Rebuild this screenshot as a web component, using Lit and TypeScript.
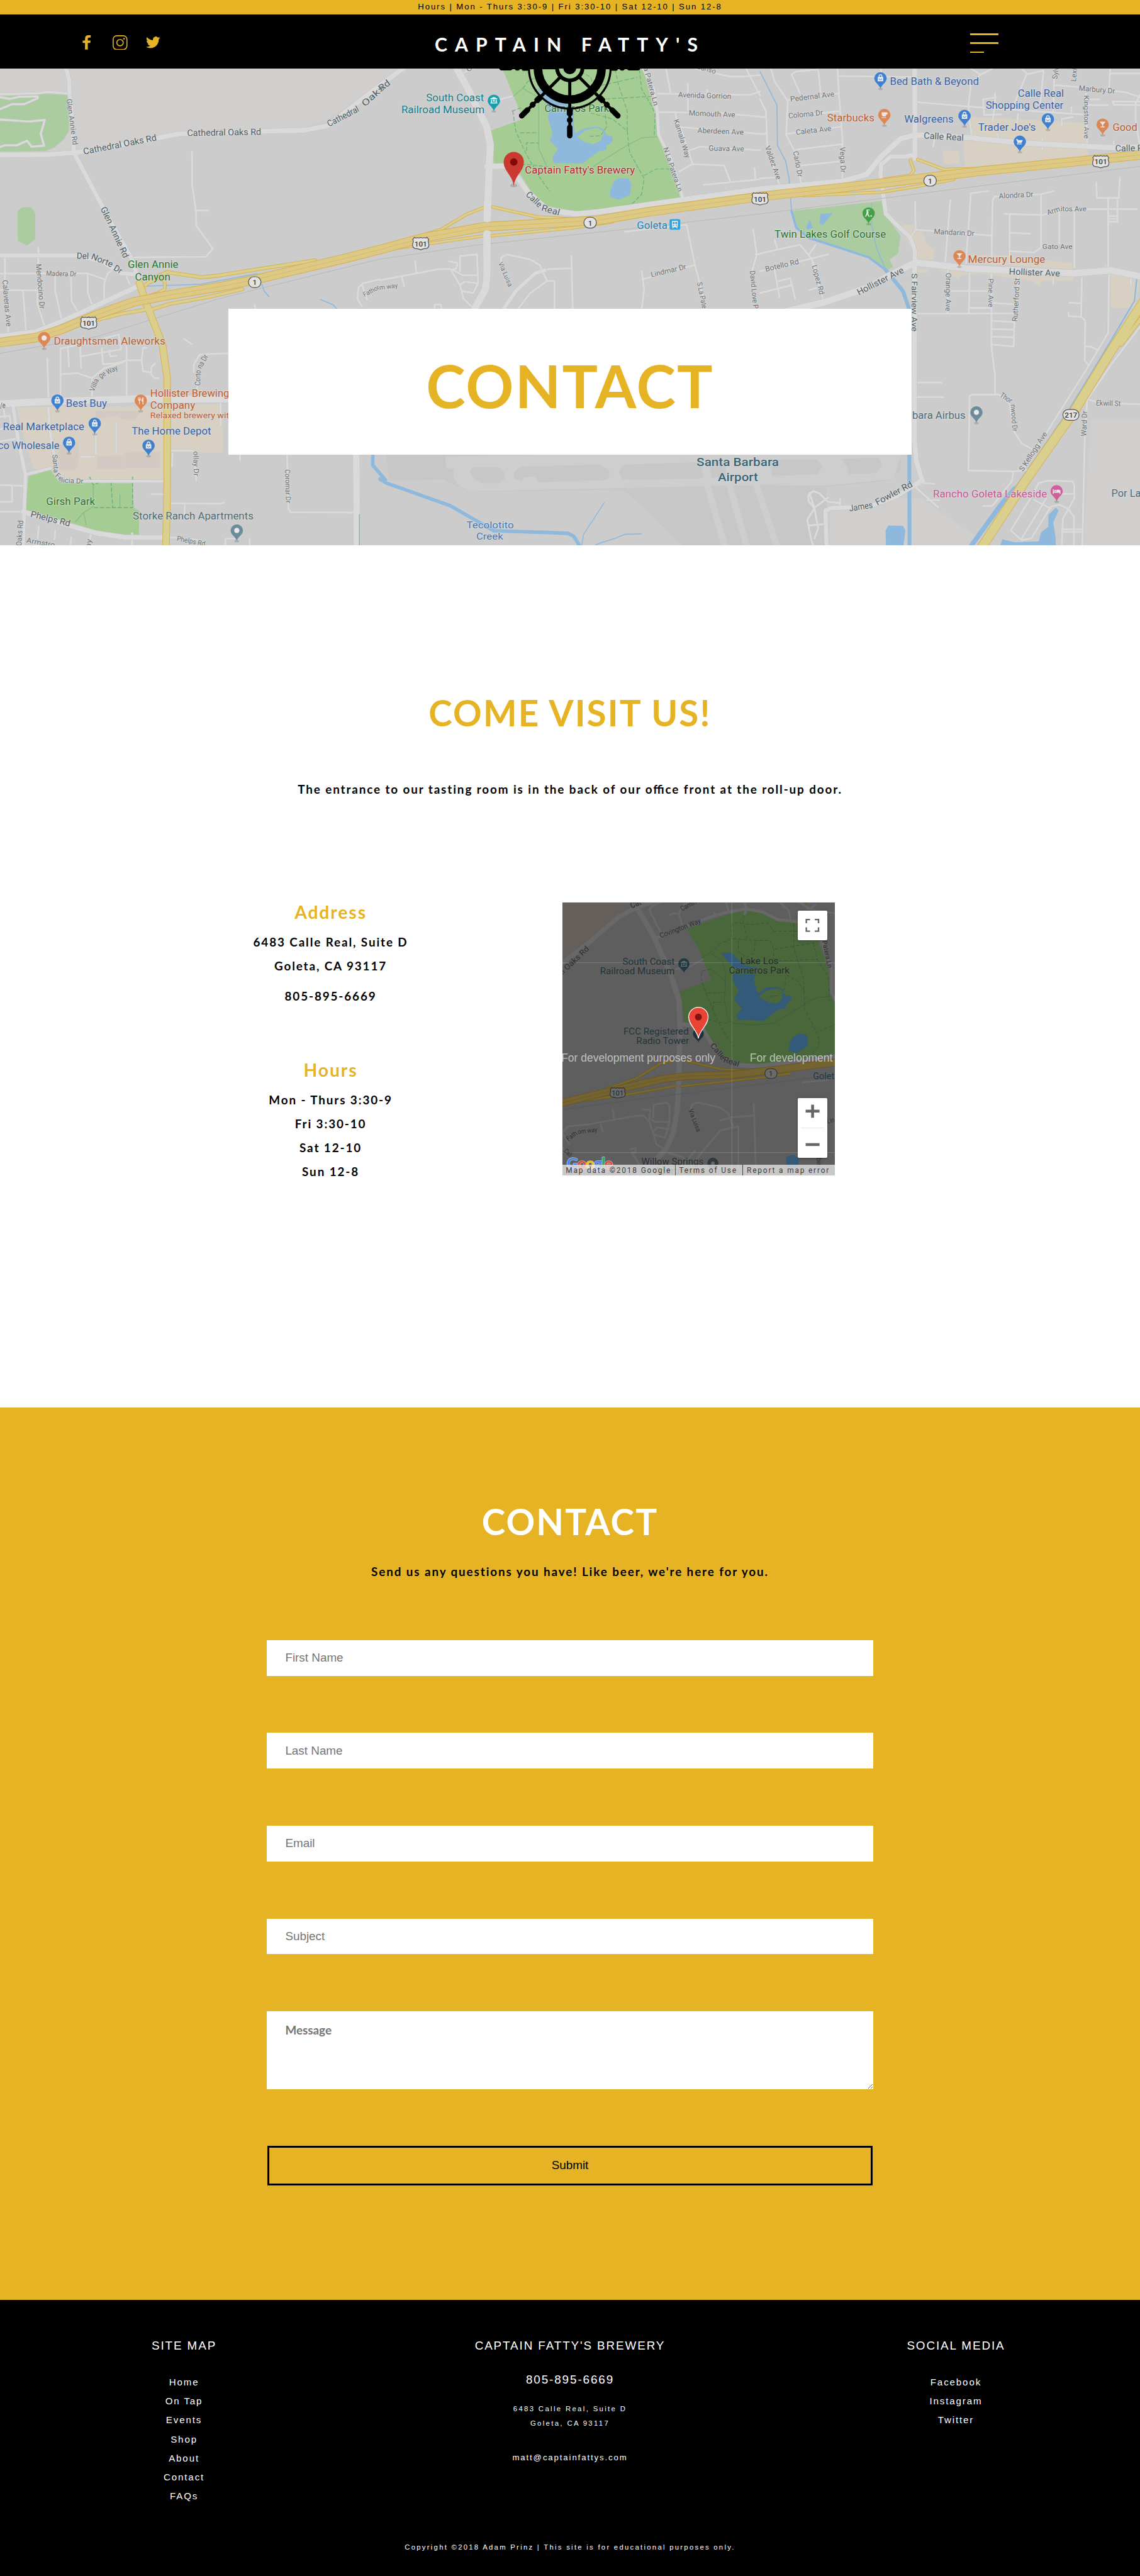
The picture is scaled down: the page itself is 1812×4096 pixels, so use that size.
import { LitElement, html, svg, css } from "lit";
import { customElement } from "lit/decorators.js";

type Origin = [number, number];
const A: Origin = [0, 0], B: Origin = [1568, 0], C: Origin = [3136, 0];
const D: Origin = [0, 1320], E: Origin = [1568, 1320], F: Origin = [3136, 1320];

/* Survey sheets are 1568 units wide; one page pixel is 2.45 x 3 units. */
const KX = 2.45, KY = 3;
const r1 = (n: number) => Math.round(n * 10) / 10;
const at = (o: Origin, x: number, y: number): Origin => [r1((o[0] + x) / KX), r1((o[1] + y) / KY)];
const pts = (o: Origin, s: string) =>
  s.trim().split(/\s+/).map((p) => { const [x, y] = p.split(",").map(Number); return at(o, x, y).join(","); }).join(" ");

const line = (o: Origin, s: string, cls: string, w: number) =>
  svg`<polyline class=${cls} points=${pts(o, s)} stroke-width=${w}></polyline>`;
const area = (o: Origin, s: string, cls: string) => svg`<polygon class=${cls} points=${pts(o, s)}></polygon>`;

const minor: [Origin, string[]][] = [
  [A, ["0,475 160,470 200,463 285,472", "0,550 50,525 100,525 155,495 155,485 80,488 40,498 0,490", "0,603 120,613 185,605 168,675 182,735 130,740 112,710 70,733 20,733 0,742",
    "792,765 793,935 808,1060 810,1140 878,1255 850,1297 545,1300", "808,1062 860,1063", "0,1382 360,1380 430,1410", "20,1295 20,1440", "158,1250 158,1330"]],
  [D, ["158,-60 155,220 185,330", "20,-20 20,145 35,360", "0,145 150,147", "95,147 107,345", "227,70 227,145 255,300", "293,70 295,200 325,262", "362,65 362,160 382,225",
    "430,190 430,110 445,60 470,40", "520,70 535,115", "195,490 200,690", "250,680 250,440 330,420 490,370 500,440", "280,440 285,530", "330,425 335,540", "335,480 400,465 500,445",
    "420,440 425,520 480,515 520,500", "450,450 455,480 480,478", "522,420 522,690", "520,500 585,500 590,555 620,560 635,590 655,590", "585,500 590,437 605,437", "640,515 625,535 625,555",
    "255,570 320,565 380,590 430,540 510,510", "380,600 380,690", "800,560 800,520 825,470 940,465", "812,580 815,690", "0,910 75,895", "0,1130 100,1135", "0,1265 100,1265",
    "50,1140 50,1215 0,1215", "0,785 40,780 45,830 0,850", "15,745 20,790", "395,800 395,975", "480,815 480,970", "335,987 390,987", "625,1177 680,1177", "700,1223 910,1225 925,1218", "762,1230 762,1280",
    "705,957 800,957 810,1110", "710,1035 712,970", "1185,980 1190,1250 1200,1268 1480,1270", "910,720 910,830", "1480,130 1500,110 1568,90", "1480,130 1475,190 1495,230", "1495,120 1515,195",
    "545,1375 545,1440", "375,1380 365,1440", "160,1340 155,1400", "228,1360 225,1405", "295,1395 290,1440", "930,1440 930,1402 975,1400", "1030,1402 1030,1440", "700,1395 830,1410",
    "760,392 790,417", "1050,220 1055,240", "990,980 990,1005"]],
  [B, ["470,510 545,485", "340,370 390,340", "1145,472 1530,478 1568,460", "1180,345 1200,470", "1270,420 1270,555", "1300,345 1440,385 1500,385 1568,378", "1350,450 1352,472",
    "1150,565 1400,570 1568,588", "1218,565 1230,640 1568,675", "1275,760 1320,740 1568,758", "1240,640 1290,828", "1235,865 1290,828 1420,835 1445,915", "1335,933 1568,905",
    "1545,850 1550,905", "1510,345 1568,480", "0,1415 240,1360 290,1358 330,1440 345,1510 380,1550", "145,1320 150,1375", "285,1320 320,1328 315,1355 300,1362", "330,1370 330,1292 400,1285 405,1430 385,1480 340,1470",
    "300,1362 340,1390 405,1390", "330,1440 350,1422 400,1430", "90,1400 100,1445", "500,1340 500,1300 525,1285 620,1310 660,1340 690,1420", "660,1372 690,1360 790,1355", "790,1290 795,1560",
    "570,1560 620,1480 690,1418 720,1420 720,1560", "1080,1370 1090,1460 1080,1560", "1085,1410 1300,1338", "1010,1170 1265,1135 1300,1340 1345,1550", "1540,1160 1555,1285 1535,1370", "1550,1285 1568,1283",
    "225,1560 225,1538 250,1538 255,1560"]],
  [C, ["45,345 60,410 115,510 108,680 150,780 170,930", "320,345 325,470 340,700 340,905", "110,505 325,470", "130,375 165,470", "130,375 150,360 240,350 250,465", "115,590 330,560", "110,675 330,640",
    "150,755 335,728", "170,835 325,815", "0,900 80,895", "0,500 25,560 30,740 80,935", "0,590 22,590", "0,675 25,675", "325,383 635,388", "500,345 500,380", "650,515 860,537 1340,578",
    "870,430 860,530 865,610 875,690", "720,700 715,740", "870,345 910,375 870,430", "1170,355 1100,375 1050,520", "910,375 960,345", "1220,430 1340,440 1510,465 1568,490", "1100,370 1080,345", "1170,360 1155,540",
    "1215,345 1210,560", "1345,470 1350,720", "1568,480 1550,520 1550,600 1565,720", "1445,345 1440,450", "1445,370 1568,370", "1355,500 1400,500", "1355,530 1435,530", "1568,512 1455,512 1460,528 1568,530", "920,500 925,580 995,577",
    "925,500 975,490", "970,470 970,520 960,610", "1065,575 1060,620", "1245,630 1245,600 1290,590", "1285,540 1285,570", "980,675 985,700", "1165,700 1165,750", "1460,710 1460,740",
    "640,1020 642,1160 620,1200", "645,1160 960,1190", "785,1010 765,1320", "940,965 870,975 850,1330", "1210,965 1160,980 970,992 960,1010 955,1330", "1010,1080 1170,1085",
    "1160,980 1160,1250 1130,1275 1035,1268", "1030,1080 1030,1330", "1035,1175 1115,1180", "1170,1085 1240,1055 1555,1055", "1235,1060 1235,1230", "1297,1070 1297,1350",
    "1388,920 1390,1000 1480,1000 1485,895", "1437,1000 1437,1380", "1475,1010 1475,1120", "1440,1090 1475,1090", "1440,1105 1475,1105", "1440,1120 1475,1120", "0,1280 165,1235 215,1310 240,1400", "60,1210 70,1255", "230,1235 205,1280", "0,1370 280,1285"]],
  [F, ["215,0 260,190", "0,160 130,120", "60,40 80,180", "75,100 125,85 145,190", "205,145 245,130", "775,40 775,260", "865,50 862,260", "955,30 955,430 970,580 970,670", "790,150 950,150",
    "650,265 1045,262", "960,210 1050,217", "865,235 955,235", "960,300 1050,307", "960,342 1045,345", "960,380 1045,385", "955,420 1047,430 1050,300", "1065,60 1060,300", "1210,75 1210,115",
    "645,612 750,612", "645,686 755,686", "860,1057 865,680 875,673 985,673 1030,720 1048,860 1080,920 1140,960", "860,1057 1050,1062 1100,1055", "1045,1065 1040,1110 960,1235 920,1237",
    "640,1140 735,1243", "640,1140 670,1120 720,1125", "690,1207 740,1207", "1440,60 1437,360 1350,540 1180,870 1080,1060", "1328,85 1325,275", "1272,260 1275,277 1325,280 1342,300 1340,500 1355,525",
    "1345,430 1365,430 1395,450", "1275,208 1325,212", "1568,330 1450,520 1350,700 1340,900 1330,1440", "1360,700 1400,715 1568,722", "1120,1190 1150,1120 1190,1108 1290,1112 1297,1130 1297,1200 1250,1300 1245,1440",
    "1120,1190 1035,1360 1080,1410 1120,1400 1200,1240 1235,1230 1270,1250 1295,1290 1295,1440", "1245,1355 1330,1355", "1245,1368 1330,1368", "1180,1200 1080,1400", "1130,1205 1200,1250", "1245,1175 1297,1175", "220,1440 210,1400 200,1335 195,1305 225,1250 200,1210 200,1180 220,1162 245,1172 280,1215 330,1222",
    "205,1170 225,1250 240,1350 225,1400", "225,1245 280,1195", "200,1335 265,1328", "330,1200 330,1235", "1530,90 1530,120"]],
];

const major: [Origin, string, number][] = [
  [A, "0,782 195,780 310,770 440,745 740,675 1080,662 1255,657 1350,635 1568,430 1690,320", 8],
  [A, "272,340 285,400 287,470 295,560 305,770 430,1060 545,1310 560,1370 580,1440", 7],
  [A, "0,1290 320,1290 420,1320 500,1380 560,1385", 7],
  [D, "0,378 150,355 240,310 350,250 570,125", 8],
  [D, "0,720 160,710 560,695 940,695", 12],
  [D, "55,740 75,900 105,1080 100,1260 95,1440", 6],
  [D, "200,740 205,850 225,1000 240,1080 280,1110 680,1112", 4.5],
  [D, "115,1075 210,1045", 5],
  [D, "95,1265 300,1340 400,1375 520,1395 680,1395", 8],
  [D, "1470,978 1473,1440", 11],
  [B, "310,330 360,440 440,640 455,730 450,850 443,1100 441,1400 435,1460 390,1560", 12],
  [B, "440,840 520,838 570,900 610,970 690,1060 810,1080 900,1070 1240,1010 1568,955 1908,915 2008,880 2068,790 2148,700 2208,680 2438,695 2638,720 3018,745 3136,742", 9],
  [B, "1085,340 1130,450 1145,570 1150,680 1200,800 1250,1000", 5],
  [B, "510,1560 560,1470 640,1380 680,1365", 6],
  [C, "638,345 640,800", 8],
  [C, "640,780 600,790 540,790 500,830 497,880 510,1000 520,1080 560,1130 620,1200 638,1260 640,1330", 7],
  [F, "-60,300 270,205 450,130 520,80 640,5 850,35 1300,60 1450,45 1568,75", 11],
  [F, "638,20 637,900 645,1010 670,1110", 8],
  [F, "670,1105 560,1190 450,1240 290,1248 270,1260 275,1440", 7],
];

const US101 = "0,1730 150,1705 250,1665 400,1590 550,1525 700,1490 920,1445 1060,1410 1440,1300 1568,1260 1748,1200 2000,1145 2290,1125 2470,1112 2670,1070 3136,992 3636,925 4036,865 4704,782";
const ramps: [Origin, string, number][] = [
  [D, "600,120 640,80 690,55 830,80 900,72 1060,40 1300,-5", 5], [D, "600,180 650,160 680,140 680,100 650,85 620,105", 4],
  [D, "320,320 500,265 620,240", 5], [D, "620,245 700,215 860,180 1000,140", 5],
  [D, "575,110 600,200 625,280 670,420 690,590 690,1110 685,1440", 11],
  [B, "100,1215 250,1160 360,1080 435,1045", 4], [B, "465,1045 650,1095 850,1110", 4], [B, "60,1255 430,1190", 4], [B, "460,1190 800,1150 960,1120", 4],
  [C, "620,810 635,860 620,885 510,905", 4], [C, "650,805 760,855 940,850", 4], [C, "180,988 500,970 650,940 800,905", 4],
  [F, "1590,190 1450,450 1300,750 1100,1100 915,1445", 15], [F, "1590,260 1490,420", 6],
];

const trails = ["548,560 560,660 600,770 650,880 700,965", "580,670 655,670", "605,760 605,720 655,722", "870,570 960,600 1020,660 1030,770 1090,900 1080,980 1040,1030 980,1045",
  "1090,885 1140,853 1230,853", "545,560 590,540", "910,500 1130,485", "915,430 1060,390", "970,350 985,430 1020,560 1020,660", "590,445 610,410 660,380",
  "930,580 935,640 910,685 865,687", "1070,350 1080,450 1110,510 1135,570 1132,680", "830,360 870,390 880,430", "510,825 600,830 690,840"];

/* Label: start and end of the baseline, then text, size and colour class. */
type Label = [Origin, number, number, number, number, string, number, string];
const labels: Label[] = [
  [A, 274, 500, 300, 733, "Glen Annie Rd", 12.5, "st"], [A, 346, 780, 648, 708, "Cathedral Oaks Rd", 15, "mj"], [A, 772, 686, 1078, 680, "Cathedral Oaks Rd", 15, "mj"],
  [A, 1358, 640, 1484, 560, "Cathedral", 15, "mj"], [A, 1506, 540, 1590, 446, "Oaks", 15, "mj"], [B, 5, 462, 45, 424, "Rd", 15, "mj"], [A, 414, 1052, 510, 1306, "Glen Annie Rd", 15, "mj"], [A, 527, 1354, 736, 1354, "Glen Annie", 17, "gr"], [A, 557, 1416, 703, 1416, "Canyon", 17, "gr"],
  [A, 316, 1306, 366, 1308, "Del", 14.5, "mj"], [A, 374, 1306, 460, 1350, "Norte", 14.5, "mj"], [A, 466, 1362, 496, 1384, "Dr", 14.5, "mj"], [A, 190, 1393, 315, 1396, "Madera Dr", 12, "st"], [D, 148, 14, 164, 240, "Mendocino Dr", 13, "st"], [D, 10, 95, 26, 330, "Calaveras Ave", 13, "st"],
  [D, 222, 421, 682, 421, "Draughtsmen Aleworks", 17, "or"], [D, 388, 660, 408, 598, "Villa", 12.5, "st"], [D, 414, 592, 488, 546, "ge Way", 12.5, "st"], [D, 826, 628, 828, 550, "Corto", 13, "st"], [D, 830, 545, 860, 480, "na Dr", 13, "st"],
  [D, 0, 742, 22, 742, "/e", 14, "mj"], [D, 272, 736, 441, 736, "Best Buy", 17, "bl"], [D, 620, 684, 946, 684, "Hollister Brewing", 17, "or"], [D, 620, 744, 805, 744, "Company", 17, "or"], [D, 620, 793, 945, 793, "Relaxed brewery wit", 14.5, "or"],
  [D, 12, 852, 348, 852, "Real Marketplace", 17, "bl"], [D, -8, 948, 245, 948, "co Wholesale", 17, "bl"], [D, 543, 876, 871, 876, "The Home Depot", 17, "bl"],
  [D, 216, 977, 222, 1070, "Santa", 12, "st"], [D, 226, 1085, 250, 1112, "Fe", 12, "st"], [D, 252, 1118, 343, 1124, "licia Dr", 12, "st"], [D, 190, 1230, 392, 1230, "Girsh Park", 17, "gr"], [D, 124, 1291, 287, 1340, "Phelps Rd", 15, "mj"],
  [D, 548, 1306, 1046, 1306, "Storke Ranch Apartments", 17, "ap"], [D, 88, 1440, 96, 1310, "Oaks Rd", 13, "st"], [D, 108, 1421, 225, 1446, "Armstro", 12, "st"], [D, 372, 1450, 378, 1405, "ay", 12, "st"], [D, 728, 1412, 845, 1440, "Phelps Rd", 12, "st"],
  [D, 798, 960, 800, 1085, "ollay Dr", 12, "st"], [D, 1176, 1052, 1180, 1222, "Coromar Dr", 12, "st"], [D, 1504, 180, 1568, 138, "Fathor", 11, "st"], [B, -2, 1464, 74, 1452, "m way", 11, "st"],
  [B, 190, 511, 429, 511, "South Coast", 17, "te"], [B, 88, 571, 431, 571, "Railroad Museum", 17, "te"], [B, 598, 876, 1052, 876, "Captain Fatty's Brewery", 17, "rd"], [B, 679, 563, 945, 563, "Carneros Park", 17, "gr"],
  [B, 600, 985, 655, 1050, "Calle", 15, "mj"], [B, 664, 1062, 738, 1088, "Real", 15, "mj"], [B, 1060, 1155, 1186, 1155, "Goleta", 17, "tr"], [B, 1087, 340, 1130, 535, "a Patera Ln", 12, "st"], [B, 1168, 748, 1230, 970, "N La Patera Ln", 12, "st"],
  [B, 1212, 606, 1262, 800, "Kamala Way", 12, "st"], [B, 1305, 345, 1383, 372, "Canso", 12, "st"], [B, 1230, 490, 1449, 498, "Avenida Gorrion", 12.5, "st"], [B, 1274, 582, 1465, 592, "Momouth Ave", 12.5, "st"], [B, 1310, 670, 1500, 680, "Aberdeen Ave", 12.5, "st"], [B, 1356, 760, 1502, 764, "Guava Ave", 12.5, "st"],
  [B, 1120, 1400, 1265, 1358, "Lindmar Dr", 12.5, "st"], [B, 488, 1328, 530, 1450, "Via Luisa", 11.5, "st"], [B, 1308, 1428, 1330, 1560, "S La Pate", 12.5, "st"], [B, 1526, 1368, 1540, 1560, "David Love P", 12.5, "st"], [B, 362, 362, 400, 338, "Co", 12, "st"],
  [C, 536, 427, 903, 427, "Bed Bath & Beyond", 17, "bl"], [C, 277, 613, 472, 613, "Starbucks", 17, "or"], [C, 595, 619, 799, 619, "Walgreens", 17, "bl"], [C, 1064, 487, 1254, 487, "Calle Real", 17, "bl"], [C, 931, 547, 1252, 547, "Shopping Center", 17, "bl"],
  [C, 900, 660, 1138, 660, "Trader Joe's", 17, "bl"], [C, 1455, 660, 1557, 660, "Good", 17, "or"], [C, 1466, 764, 1580, 762, "Calle R", 15, "mj"], [C, 675, 699, 840, 710, "Calle Real", 15, "mj"], [C, 126, 512, 307, 486, "Pedernal Ave", 12.5, "st"],
  [C, 118, 597, 260, 580, "Coloma Dr", 12.5, "st"], [C, 149, 680, 295, 660, "Caleta Ave", 12.5, "st"], [C, 20, 742, 68, 908, "Valdez Ave", 12.5, "st"], [C, 136, 765, 156, 895, "Carlo Dr", 12.5, "st"], [C, 330, 742, 333, 872, "Vega Dr", 12.5, "st"],
  [C, 1226, 400, 1232, 338, "Sylv", 12, "st"], [C, 1303, 412, 1308, 345, "Lexi", 12, "st"], [C, 1315, 456, 1464, 472, "Marbury Dr", 12.5, "st"], [C, 1337, 480, 1337, 700, "Kingston Ave", 12.5, "st"],
  [C, 986, 1002, 1128, 993, "Alondra Dr", 12.5, "st"], [C, 1188, 1087, 1240, 1066, "Arm", 12.5, "st"], [C, 1240, 1066, 1347, 1066, "itos Ave", 12.5, "st"], [C, 60, 1200, 520, 1200, "Twin Lakes Golf Course", 17, "gr"], [C, 717, 1181, 884, 1192, "Mandarin Dr", 12.5, "st"],
  [C, 1165, 1258, 1289, 1258, "Gato Ave", 12.5, "st"], [C, 858, 1326, 1177, 1326, "Mercury Lounge", 17, "or"], [C, 1027, 1386, 1237, 1396, "Hollister Ave", 15, "mj"], [C, 24, 1372, 162, 1332, "Botello Rd", 12.5, "st"], [C, 214, 1342, 246, 1490, "Lopez Rd", 12.5, "st"],
  [F, 408, 172, 596, 54, "Hollister Ave", 15, "mj"], [F, 626, 60, 626, 355, "S Fairview Ave", 14.5, "mj"], [F, 767, 58, 766, 252, "Orange Ave", 12.5, "st"], [F, 942, 86, 942, 232, "Pine Ave", 12.5, "st"], [F, 1062, 305, 1072, 85, "Rutherford St", 12.5, "st"],
  [F, 988, 682, 1032, 718, "Thor", 12.5, "st"], [F, 1034, 724, 1042, 860, "nwood Dr", 12.5, "st"], [F, 1085, 1064, 1186, 872, "S Kellogg Ave", 12.5, "st"], [F, 1346, 884, 1350, 756, "Ward Dr", 12.5, "st"], [F, 1386, 728, 1488, 732, "Ekwill St", 12.5, "st"],
  [F, 628, 796, 848, 796, "bara Airbus", 17, "ap"], [F, 714, 1194, 1184, 1194, "Rancho Goleta Lakeside", 17, "pk"], [F, 1450, 1190, 1572, 1190, "Por La", 17, "ap"], [F, 370, 1264, 466, 1246, "James", 15, "mj"], [F, 484, 1234, 632, 1136, "Fowler Rd", 15, "mj"],
  [E, 1306, 1034, 1646, 1034, "Santa Barbara", 20, "ai"], [E, 1394, 1111, 1560, 1111, "Airport", 20, "ai"], [E, 357, 1350, 552, 1350, "Tecolotito", 16, "wa"], [E, 397, 1406, 508, 1406, "Creek", 16, "wa"],
];

const label = ([o, x1, y1, x2, y2, text, size, cls]: Label) => {
  const [ax, ay] = at(o, x1, y1), [bx, by] = at(o, x2, y2);
  const len = r1(Math.hypot(bx - ax, by - ay));
  const ang = r1((Math.atan2(by - ay, bx - ax) * 180) / Math.PI);
  return svg`<text class=${"lb " + cls} font-size=${size} textLength=${len} lengthAdjust="spacingAndGlyphs" transform=${`translate(${ax} ${ay}) rotate(${ang})`}>${text}</text>`;
};

const glyphs: Record<string, unknown> = {
  bag: svg`<path class="gw" d="M-4.6,-20h9.2v7.4h-9.2zM-3,-20v-1.2a3,3.2 0 0 1 6,0v1.2h-1.4v-1a1.6,1.8 0 0 0 -3.2,0v1z"></path><path class="gk" d="M-2.2,-17.2a2.2,2.2 0 0 0 4.4,0"></path>`,
  cart: svg`<path class="gw" d="M-6,-22h2.2l.8,1.8h8l-2,4.8h-5.8l-.6,1.2h6.6v1.2h-8.4l1.4,-2.8l-2,-5h-.2z"></path>`,
  cup: svg`<path class="gw" d="M-4.6,-22h8c3,0 3,4 -.2,4.2c-.6,2 -1.4,2.6 -2.2,2.6h-3.2c-1.6,0 -2.4,-2 -2.4,-6.8zM-4.6,-13.6h7.6v1.2h-7.6z"></path>`,
  glass: svg`<path class="gw" d="M-5,-22.5h10l-4.2,5v3h2.6v1.6h-6.8v-1.6h2.6v-3z"></path>`,
  fork: svg`<path class="gw" d="M-4.6,-23h1v3.6h.8v-3.6h1v3.6h.8v-3.6h1v4.4l-1.6,1.4v5.6h-1.4v-5.6l-1.6,-1.4zM4.6,-23v12h-1.6v-5h-1.8c0,-4 1.4,-7 3.4,-7z"></path>`,
  dot: svg`<circle class="gw" cx="0" cy="-17.6" r="4.4"></circle>`,
  golf: svg`<path class="gw" d="M-4,-24h6v1.4h-4l2,2.4l-.6,3.4l2.6,5h-1.8l-2.6,-4l-2,4h-1.6l2.4,-6l.4,-3zM3,-14.4h2.6v2.4h-2.6z"></path>`,
  bed: svg`<path class="gw" d="M-6.4,-21h1.4v4.4h4.6v-3.4h4.4c1.6,0 2.4,1 2.4,2.4v4.6h-1.4v-1.8h-10v1.8h-1.4z"></path><circle class="gw" cx="-2.6" cy="-18.4" r="1.4"></circle>`,
  museum: svg`<path class="gw" d="M0,-24l6,3v1.2h-12v-1.2zM-5,-19h2v4.6h6v-4.6h2v4.6h.8v1.6h-11.6v-1.6h.8zM-1.6,-19h3.2v3.2h-3.2z"></path>`,
};
const pin = (x: number, y: number, fill: string, glyph: string) => svg`
  <g transform=${`translate(${x} ${y})`}>
    <ellipse class="psh" cx="0" cy=".5" rx="4" ry="2"></ellipse>
    <path fill=${fill} d="M0,0C-1.2,-6.5 -10.4,-10.6 -10.4,-17.4A10.4,10.4 0 1 1 10.4,-17.4C10.4,-10.6 1.2,-6.5 0,0Z"></path>${glyphs[glyph]}
  </g>`;
const BLUE = "#4080d0", ORANGE = "#dc8755";
const pins: [Origin, number, number, string, string][] = [
  [C, 497, 447, BLUE, "bag"], [C, 513, 632, ORANGE, "cup"], [C, 844, 637, BLUE, "bag"], [C, 1188, 654, BLUE, "bag"], [C, 1072, 767, BLUE, "cart"], [C, 1414, 681, ORANGE, "glass"],
  [C, 448, 1130, "#43a047", "golf"], [C, 823, 1346, ORANGE, "glass"], [B, 470, 560, "#16a0ad", "museum"], [D, 182, 440, ORANGE, "dot"], [D, 237, 756, BLUE, "bag"], [D, 581, 756, ORANGE, "fork"],
  [D, 391, 873, BLUE, "bag"], [D, 285, 969, BLUE, "bag"], [D, 613, 984, BLUE, "bag"], [D, 977, 1413, "#6d8c9b", "dot"], [F, 893, 816, "#6d8c9b", "dot"], [F, 1224, 1214, "#cf609b", "bed"],
];

const shield = (x: number, y: number, text: string) => {
  const w = text === "1" ? 21 : 27;
  return text === "101"
    ? svg`<g transform=${`translate(${x} ${y})`}><path class="sh" d="M-10.5,-10.5q2.2,2 5,.4q2.6,1.6 5.5,-.4q2.9,2 5.5,.4q2.8,1.6 5,-.4l3,3.4q-2,3 0,7q1,6 -3,8q-6,.6 -10.5,2.4q-4.5,-1.8 -10.5,-2.4q-4,-2 -3,-8q2,-4 0,-7z"></path><text class="sn" x="0" y="4.6">101</text></g>`
    : svg`<g transform=${`translate(${x} ${y})`}><rect class="sh" x=${-w / 2} y="-9.2" width=${w} height="18.4" rx="9"></rect><text class="sn" x="0" y="4.8">${text}</text></g>`;
};
const shields: [Origin, number, number, string][] = [[B, 867, 1124, "1"], [D, 1051, 105, "1"], [C, 702, 912, "1"], [B, 168, 1230, "101"], [D, 366, 312, "101"], [C, 1406, 816, "101"], [B, 1568, 1004, "101"], [F, 1283, 776, "217"]];

const spoke = (deg: number) => svg`<g transform=${`rotate(${deg})`}>
  <rect x="-2.6" y="22" width="5.2" height="50"></rect><rect x="-5" y="68" width="10" height="13" rx="3"></rect><rect x="-2.5" y="78" width="5" height="20"></rect>
  <rect x="-4.8" y="84" width="9.6" height="8.5" rx="4"></rect><rect x="-4.6" y="96" width="9.2" height="23" rx="4.4"></rect></g>`;

@customElement("hero-map")
class HeroMap extends LitElement {
  static styles = css`
    :host { display: block; }
    svg { display: block; width: 100%; height: 100%; }
    polyline { fill: none; stroke-linejoin: round; stroke-linecap: round; }
    .rd0 { stroke: #dadada; } .rdE { stroke: #c3c3c3; } .hwE { stroke: #d9b154; } .hw { stroke: #dcc985; } .st2 { stroke: #dbcf8e; } .mid { stroke: #d8b65e; }
    .rail { stroke: #b7b7b7; } .riv { stroke: #8fb9dc; } .wat { fill: #8fb9dc; } .pk1 { fill: #a4cc93; } .pk2 { fill: #abcca0; }
    .pale { fill: #d0cfcd; } .mall { fill: #d8d1c3; } .bld { fill: #d3cac4; } .apt { fill: #c7c7c7; } .tarm { fill: #cecece; } .tx { stroke: #cecece; }
    .trail { stroke: #6cb07b; stroke-dasharray: 6 4; } .trs { stroke: #82b98a; }
    .lb { font-family: Roboto, sans-serif; font-weight: 400; paint-order: stroke; stroke: rgba(222, 222, 222, 0.7); stroke-width: 2px; stroke-linejoin: round; }
    .mj { fill: #4f5f66; } .st { fill: #6c7377; } .gr { fill: #26772e; } .or { fill: #bd5f35; } .bl { fill: #3763a6; } .te { fill: #177d8a; }
    .rd { fill: #b52a26; } .tr { fill: #1f83b8; } .ap { fill: #506b76; } .pk { fill: #c9569a; } .ai { fill: #3a6674; font-weight: 500; } .wa { fill: #4877b3; }
    .gw { fill: #e9e9ea; } .gk { fill: none; stroke: #4080d0; stroke-width: 1; } .psh { fill: rgba(0, 0, 0, 0.15); }
    .sh { fill: #e2e2e2; stroke: #555; stroke-width: 1.3; } .sn { font: 500 12.5px Roboto, sans-serif; fill: #3a3a3a; text-anchor: middle; }
    .ring { fill: none; stroke: #000; }
  `;
  render() {
    const O: Origin = [0, 0];
    const [mx, my] = at(B, 552, 936), [tx, ty] = at(B, 1217, 1133);
    return html`<svg viewBox="0 115 1920 804" preserveAspectRatio="none" aria-label="Area map">
      <rect x="0" y="115" width="1921" height="804" fill="#cccccc"></rect>
      ${area(A, "0,345 1690,345 1568,430 1350,600 1255,645 740,665 440,735 310,760 0,770", "pale")}
      ${area(F, "1365,800 1568,795 1568,1440 1335,1440", "pale")}${area(F, "290,1260 560,1200 670,1200 900,1400 860,1440 285,1440", "pale")}
      ${area(E, "25,960 1900,960 2150,1000 2150,1060 2090,1110 1840,1140 1850,1440 1250,1440 1040,1190 1000,1155 370,1165 260,1103 35,1108", "apt")}
      ${area(E, "270,985 1568,960 2150,975 2120,1100 1830,1135 1568,1130 370,1163 320,1130 303,1095 303,1047 272,1045", "tarm")}
      ${["370,1060 380,1042 395,1040 490,1040 513,1065 513,1100 490,1122 420,1122 385,1095", "553,1065 580,1038 910,1027 947,1060 945,1095 930,1105 655,1117 640,1088 595,1090 585,1110 555,1100",
        "985,1060 1010,1027 1320,1015 1335,1090 1320,1097 1060,1105 1000,1100", "1355,1010 1425,1010 1430,1090 1370,1095", "1608,1010 1660,1000 1800,1000 1826,1035 1808,1075 1618,1085", "1903,997 2058,993 2073,1030 2048,1070 1933,1075 1928,1040"].map((s) => area(E, s, "apt"))}
      ${line(E, "1350,1130 1425,1450", "tx", 11)}${line(E, "1440,1120 1515,1450", "tx", 11)}${line(E, "1550,1120 1640,1450", "tx", 11)}
      ${area(A, "0,485 200,473 283,480 285,660 265,700 225,745 185,762 0,765", "pk2")}${area(A, "73,1065 90,1048 110,1045 130,1048 145,1075 145,1210 110,1240 73,1215", "pk2")}
      ${area(D, "70,740 200,735 660,735 920,720 920,965 705,965 705,1102 240,1100 210,1050 140,1050 90,850", "mall")}
      ${["240,930 325,910 325,1030 310,1055 240,1055", "395,755 580,755 560,800 510,800 475,780 395,800", "400,985 515,980 515,1050 400,1050", "515,965 660,960 660,1045 515,1045"].map((s) => area(D, s, "bld"))}
      ${area(D, "118,1085 210,1055 240,1110 280,1120 548,1122 552,1245 575,1260 573,1382 500,1380 380,1355 290,1320 105,1255", "pk1")}
      ${["870,590 1050,600 1340,620 1355,640 1355,790 845,845 840,700 870,690", "755,760 820,765 825,825 760,830", "585,1135 640,1135 640,1160 670,1170 690,1240 720,1260 715,1310 650,1310 600,1200",
        "870,1290 960,1285 1150,1310 1290,1330 1290,1360 870,1330", "740,1360 1300,1370 1290,1415 1160,1420 1150,1445 1130,1420 900,1380 830,1390 820,1410", "1420,1330 1568,1410 1545,1555 1450,1555 1445,1400", "650,1360 695,1360 690,1375 655,1375"].map((s) => area(C, s, "mall"))}
      ${area(C, "135,1065 500,1015 520,1090 580,1190 570,1280 535,1310 550,1350 520,1365 450,1300 200,1200 150,1150", "pk2")}
      ${area(B, "505,345 550,480 590,600 455,660 470,830 520,833 580,880 620,960 690,1040 810,1067 900,1060 1240,1000 1200,850 1150,700 1130,550 1085,345", "pk1")}
      ${area(B, "645,445 670,455 720,510 800,530 800,640 805,670 850,645 900,638 925,655 935,680 960,690 960,715 935,735 935,755 900,765 835,825 715,822 712,790 735,750 700,710 712,670 692,590 700,560 670,490", "wat")}
      ${area(B, "815,690 850,655 900,645 925,665 910,710 880,728 840,715", "pk1")}${area(B, "985,900 1025,900 1038,930 1030,985 985,1008 950,995 950,960 965,915", "wat")}
      ${area(C, "250,1080 300,1075 260,1135 245,1130", "wat")}${area(C, "205,1110 218,1150 195,1160 190,1145", "wat")}
      ${trails.map((s) => line(B, s, "trail", 1.3))}${["655,500 655,750 685,830", "880,840 1010,740 1080,695 1145,690", "545,490 590,445 650,490"].map((s) => line(B, s, "trs", 1.2))}
      ${["370,1090 385,1130 405,1120", "458,1115 465,1245", "547,1090 547,1245 380,1245"].map((s) => line(D, s, "trail", 1.5))}${["385,1130 385,1240 345,1270 312,1315", "345,1270 355,1330", "495,1180 495,1245"].map((s) => line(D, s, "trs", 1.3))}
      ${line(C, "0,360 70,530 72,735 105,810 120,900 130,1065", "riv", 1.8)}${line(C, "130,1065 150,1150 200,1200 450,1300 520,1365", "riv", 4)}${line(C, "520,1365 590,1470 615,1560 617,2757", "riv", 6.5)}${line(C, "460,1025 460,1130 480,1250 515,1350", "riv", 1.6)}
      ${line(D, "608,125 830,115 1060,62", "riv", 1.8)}${line(D, "1080,115 1090,150 1110,178", "riv", 1.8)}${line(D, "1323,193 1375,220 1392,242", "riv", 1.8)}${line(D, "1538,978 1538,1030 1590,1105", "riv", 6)}
      ${line(E, "0,1100 25,1120 290,1235 470,1362 690,1370 775,1375 800,1390 825,1440", "riv", 6)}${line(E, "925,1220 840,1380 832,1440", "riv", 1.6)}${line(E, "890,1435 905,1425 970,1400 1010,1380 1078,1377", "riv", 1.8)}
      ${line(F, "1557,60 1545,200 1400,500 1270,760 1050,1150", "riv", 2.4)}${line(F, "1050,1150 1000,1220 870,1440", "riv", 8)}
      ${area(F, "1222,1245 1232,1260 1210,1320 1220,1400 1220,1440 990,1440 1000,1405 1050,1420 1150,1415 1160,1370 1190,1340 1190,1280", "wat")}${area(F, "530,1335 590,1337 600,1360 592,1440 520,1440 518,1360", "wat")}
      ${minor.map(([o, l]) => l.map((s) => line(o, s, "rdE", 4.4)))}${minor.map(([o, l]) => l.map((s) => line(o, s, "rd0", 3.4)))}
      ${major.map(([o, s, w]) => line(o, s, "rdE", w + 1))}${major.map(([o, s, w]) => line(o, s, "rd0", w))}
      ${line(O, "0,1785 400,1700 900,1510 1280,1395 1560,1310 1950,1240 2560,1160 3136,1080 4000,945 4704,840", "rail", 1)}
      ${line(D, "1483,1280 1483,1440", "trs", 1.5)}
      ${ramps.map(([o, s, w]) => line(o, s, "hwE", w + 1.6))}${ramps.map(([o, s, w]) => line(o, s, "st2", w - 0.6))}
      ${line(O, US101, "hwE", 16)}${line(O, US101, "hw", 13.6)}${line(O, US101, "mid", 0.9)}
      ${line(B, "444,1020 442,1105", "rd0", 12)}${line(B, "441,1180 441,1300", "rd0", 12)}
      ${labels.map(label)}
      ${shields.map(([o, x, y, t]) => shield(...at(o, x, y), t))}
      ${pins.map(([o, x, y, c, g]) => pin(...at(o, x, y), c, g))}
      <g transform=${`translate(${tx} ${ty})`}><rect x="-9" y="-9" width="18" height="18" rx="2.5" fill="#27a5dc"></rect><path class="gw" d="M-5,-6h10v10h-2l2,2.6h-2l-1.4,-2h-3.2l-1.4,2h-2l2,-2.6h-2z"></path><path fill="#27a5dc" d="M-3.6,-4h3v3.4h-3zM.6,-4h3v3.4h-3zM-3.4,1h1.8v1.6h-1.8zM1.6,1h1.8v1.6h-1.8z"></path></g>
      <g transform=${`translate(${mx} ${my})`}><ellipse class="psh" cx="0" cy="0" rx="6" ry="3"></ellipse>
        <path fill="#cb3a31" d="M0,1C-2,-17 -17,-24 -17,-39.5A17,17 0 1 1 17,-39.5C17,-24 2,-17 0,1Z"></path><circle cx="0" cy="-39.5" r="6.2" fill="#800b06"></circle></g>
      <g transform="translate(959.6 113.6)"><circle class="ring" r="68.8" stroke-width="3.4"></circle><circle class="ring" r="53.6" stroke-width="14.4"></circle><circle class="ring" r="21.4" stroke-width="6.4"></circle><circle r="11"></circle>
        ${[0, 45, -45, 90, -90].map(spoke)}</g>
    </svg>`;
  }
}

/* Local map: three units per pixel, origin at 51,63. */
const lp = (s: string) => s.split(" ").map((p) => { const [x, y] = p.split(",").map(Number); return `${r1((x - 51) / 3)},${r1((y - 63) / 3)}`; }).join(" ");
const ll = (s: string, cls: string, w: number) => svg`<polyline class=${cls} points=${lp(s)} stroke-width=${w}></polyline>`;
const lt = (x1: number, y1: number, x2: number, y2: number, t: string, size: number, cls: string) => {
  const dx = (x2 - x1) / 3, dy = (y2 - y1) / 3;
  return svg`<text class=${"lb " + cls} font-size=${size} textLength=${r1(Math.hypot(dx, dy))} lengthAdjust="spacingAndGlyphs" transform=${`translate(${r1((x1 - 51) / 3)} ${r1((y1 - 63) / 3)}) rotate(${r1((Math.atan2(dy, dx) * 180) / Math.PI)})`}>${t}</text>`;
};
const localRoads = ["545,210 490,100 500,85 570,50", "595,125 610,118 640,120 660,80 690,60", "640,120 655,175", "818,115 825,130", "875,55 890,105", "1150,63 1195,105 1205,155", "1290,95 1428,118", "625,400 700,385 760,350", "1240,55 1300,95 1330,75",
  "51,1225 80,1195 180,1185 420,1142 460,1140 490,1170 515,1245 525,1285 565,1310", "305,1108 312,1155", "245,1185 255,1220", "51,1230 85,1285", "455,1108 495,1112 490,1150", "510,1150 512,1085 580,1075 592,1090 592,1172 570,1252 520,1238", "490,1155 520,1172 592,1172", "515,1215 530,1200 590,1208",
  "720,1145 700,1110 705,1085 735,1073 800,1088 850,1100 890,1130 910,1190", "1018,1080 1020,1150 1028,1400", "1018,1140 900,1150 850,1165", "700,1400 760,1320 850,1215 940,1195 940,1400", "650,1400 720,1320", "590,1330 660,1350 680,1400", "395,1310 420,1305 420,1330 400,1325 440,1388", "1265,972 1400,960", "1380,1180 1428,1160", "51,1300 80,1350"];
const localTrails = ["970,125 965,160 985,245", "905,240 905,180 930,165 1000,175 1090,165 1120,208 1240,208", "800,315 850,270 905,245 1020,255 1100,255 1118,300 1320,268", "940,255 940,310 980,340 1020,320 1025,255", "1220,170 1220,290 1270,450 1275,600 1345,740 1345,790 1310,830", "1320,270 1340,350 1395,440 1400,560", "1118,360 1118,300",
  "800,400 755,410 752,450 780,530 830,650 880,740 920,790", "785,522 870,518", "810,600 815,567 870,568", "790,655 870,675 900,665", "1185,430 1240,460 1275,515", "1180,440 1175,500 1140,535 1100,537", "1350,715 1428,680", "1118,360 1340,350"];

@customElement("local-map")
class LocalMap extends LitElement {
  static styles = css`
    :host { display: grid; width: 459px; height: 460px; overflow: hidden; font-family: Roboto, sans-serif; }
    .canvas, .chrome { grid-area: 1 / 1; width: 459px; height: 460px; min-width: 0; }
    .canvas { display: block; }
    polyline { fill: none; stroke-linejoin: round; stroke-linecap: round; }
    .w { stroke: #686868; } .y { stroke: #776a30; } .ye { stroke: #6f5423; } .h { stroke: #736431; } .d { stroke: #35533a; stroke-dasharray: 5 4; } .s { stroke: #3a5a3a; } .rl { stroke: #535860; }
    .green { fill: #4a673c; } .blue { fill: #335a78; } .g { stroke: rgba(255, 255, 255, 0.2); }
    .lb { paint-order: stroke; stroke: rgba(98, 98, 98, 0.8); stroke-width: 2px; }
    .k { fill: #1f3438; } .n { fill: #2b2f31; } .q { fill: #242c2a; stroke: #4f6b42; } .b { fill: #1d3746; }
    .sh { fill: #6a6a6a; stroke: #2e3133; stroke-width: 1.2; } .sn { font: 12px Roboto, sans-serif; fill: #202628; text-anchor: middle; }
    .dev { font-family: "Liberation Sans", Arial, sans-serif; fill: rgba(255, 255, 255, 0.62); }
    .logo { font: 700 27px Lato, sans-serif; paint-order: stroke; stroke: #bdbdbd; stroke-width: 1.6px; stroke-linejoin: round; }
    .chrome { display: flex; flex-direction: column; align-items: flex-end; z-index: 1; }
    .btn { width: 50px; height: 50px; margin: 13px 12px 0 0; background: #fff; border-radius: 2px; display: grid; place-items: center; box-shadow: 0 1px 4px rgba(0, 0, 0, 0.3); }
    .zoomer { margin: auto 12px 12px 0; width: 50px; height: 101px; background: #fff; border-radius: 2px; display: flex; flex-direction: column; align-items: center; box-shadow: 0 1px 4px rgba(0, 0, 0, 0.3); }
    .zoomer svg { height: 50px; width: 50px; } .sep { width: 37px; height: 1px; background: #e2e2e2; }
    .legal { width: 100%; height: 18px; background: rgba(245, 245, 245, 0.7); display: flex; font-size: 12.6px; letter-spacing: 1.95px; line-height: 20px; color: #3c3c3c; white-space: nowrap; }
    .legal div { box-sizing: border-box; padding-left: 6px; }
    .l1 { width: 191px; border-right: 1px solid #555; } .l2 { width: 114px; border-right: 2px solid #444; } .l3 { flex: 1; }
  `;
  render() {
    return html`<svg class="canvas" viewBox="0 0 459 460">
        <rect width="459" height="460" fill="#5e5e5e"></rect><polygon points="0,0 116,0 90,26 0,96" fill="#645f5b"></polygon>
        <polygon class="green" points=${lp("680,195 900,120 980,100 1060,110 1150,155 1240,165 1340,250 1400,420 1400,520 1428,570 1428,830 1200,860 1040,880 900,870 850,830 800,760 760,700 740,668 665,668 660,600 645,512 803,455 740,300")}></polygon>
        <polygon class="green" points=${lp("1270,63 1292,63 1283,78")}></polygon>
        <polygon class="blue" points=${lp("853,320 905,315 935,350 985,385 1040,390 1018,455 1038,523 1080,495 1130,488 1165,500 1168,520 1180,533 1205,538 1207,555 1180,580 1180,597 1140,605 1070,660 937,657 932,628 958,600 918,555 940,510 910,450 920,400")}></polygon>
        <polygon class="green" points=${lp("1046,532 1090,505 1140,497 1165,510 1158,555 1140,572 1100,570 1050,545")}></polygon>
        <polygon class="blue" points=${lp("1240,728 1280,730 1293,750 1288,790 1235,825 1195,812 1200,770 1215,745")}></polygon>
        <polygon class="blue" points=${lp("1185,1345 1220,1338 1248,1360 1240,1395 1185,1400 1180,1370")}></polygon>
        ${localTrails.map((s) => ll(s, "d", 1))}${["797,315 860,360 875,420 870,560 885,640 910,672 1000,682 1115,675 1200,625 1300,560 1345,542 1405,540", "750,350 797,315", "800,400 870,455"].map((s) => ll(s, "s", 1))}
        ${localRoads.map((s) => ll(s, "w", 3.2))}
        ${ll("30,385 180,270 330,140 430,85 560,40", "w", 8)}${ll("425,85 510,230 600,430 640,560 645,680 638,1000 630,1120 610,1230 575,1310 500,1385", "w", 9)}
        ${ll("520,245 760,150 870,115 980,95 1060,110 1140,150 1240,160", "w", 5)}${ll("970,55 980,95 972,122", "w", 4)}${ll("645,680 750,685 800,770 850,840 930,885 1040,890 1200,870 1428,842", "w", 7)}${ll("1350,230 1412,400 1412,520 1440,580", "w", 5)}
        ${ll("51,1110 450,1055 900,1000 1428,935", "rl", 1)}
        ${["270,1005 420,955 540,880 610,862", "680,865 850,905 1000,915", "160,1065 400,1030 620,990", "650,992 900,965 1080,945 1200,928"].map((s) => [ll(s, "ye", 4.6), ll(s, "y", 3)])}
        ${ll("40,1078 300,1015 560,955 680,940 900,935 1200,900 1440,870", "ye", 13)}${ll("40,1078 300,1015 560,955 680,940 900,935 1200,900 1440,870", "h", 10.8)}${ll("40,1078 300,1015 560,955 680,940 900,935", "ye", 0.8)}
        <path class="g" d="M285.5,0v460M0,101.5h459M0,421.5h459"></path>
        ${lt(355, 377, 618, 377, "South Coast", 15, "k")}${lt(241, 425, 618, 425, "Railroad Museum", 15, "k")}${lt(950, 374, 1143, 374, "Lake Los", 15, "q")}${lt(892, 422, 1199, 422, "Carneros Park", 15, "q")}
        ${lt(359, 731, 689, 731, "FCC Registered", 15, "k")}${lt(424, 779, 691, 779, "Radio Tower", 15, "k")}${lt(450, 1388, 764, 1388, "Willow Springs", 15, "n")}${lt(515, 1438, 764, 1438, "Apartments", 15, "n")}
        ${lt(548, 243, 752, 166, "Covington Way", 12, "n")}${lt(655, 107, 730, 68, "Camin", 12, "n")}${lt(400, 93, 452, 72, "Cat", 14, "n")}${lt(51, 430, 188, 300, "il Oaks Rd", 13, "n")}${lt(796, 787, 858, 862, "Calle", 13, "n")}${lt(862, 868, 940, 893, "Real", 13, "n")}
        ${lt(1364, 258, 1392, 396, "Patera Ln", 11, "n")}${lt(688, 1112, 730, 1224, "Via Luisa", 11, "n")}${lt(80, 1270, 128, 1234, "Fath", 11, "n")}${lt(130, 1234, 227, 1222, "om way", 11, "n")}${lt(56, 1320, 85, 1352, "Call", 11, "n")}${lt(1317, 955, 1450, 955, "Goleta", 15, "b")}${lt(1390, 1180, 1428, 1172, "Lin", 11, "n")}${lt(1334, 1353, 1334, 1400, "bin", 11, "n")}
        <g transform="translate(204.6 118.5)"><path fill="#1d3a40" d="M0,0C-1,-5.5 -9.4,-8 -9.4,-15A9.4,9.4 0 1 1 9.4,-15C9.4,-8 1,-5.5 0,0Z"></path><path fill="#686b6c" d="M0,-20.5l5.6,2.8v1.2h-11.2v-1.2zM-4.6,-15.8h1.6v4h6v-4h1.6v4h.8v1.4h-10.8v-1.4h.8zM-1.2,-15.8h2.4v2.6h-2.4z"></path></g>
        <path fill="#1d3338" transform="translate(229 236)" d="M0,0C-1,-5.5 -9.2,-8 -9.2,-15A9.2,9.2 0 1 1 9.2,-15C9.2,-8 1,-5.5 0,0Z"></path>
        <g transform="translate(253.4 439.5)"><circle r="9.4" fill="#32393c"></circle><circle r="3.2" fill="#666"></circle></g>
        <text class="dev" x="-2" y="268" font-size="18.5" textLength="259.5" lengthAdjust="spacingAndGlyphs">For development purposes only</text><text class="dev" x="315.6" y="268" font-size="18.5" textLength="139.6" lengthAdjust="spacingAndGlyphs">For development</text>
        <rect class="sh" x="341" y="280" width="20.5" height="16.5" rx="8"></rect><text class="sn" x="351" y="292.5">1</text>
        <path class="sh" d="M83,312q2.2,1.6 4.6,.2q2.6,1.6 5.4,0q2.8,1.6 5.4,0q2.4,1.4 4.6,-.2l2.6,3q-2,3 0,6q.8,5 -2.6,6.6q-5,.4 -10,2q-5,-1.6 -10,-2q-3.4,-1.6 -2.6,-6.6q2,-3 0,-6z"></path><text class="sn" x="93" y="325">101</text>
        <path d="M229,229C227,215 212.6,207 212.6,193A16.4,16.4 0 1 1 245.4,193C245.4,207 231,215 229,229Z" fill="#ea4335" stroke="#fff" stroke-width="1.3"></path><circle cx="229" cy="193" r="5.8" fill="#7f1411"></circle>
        <text class="logo" x="7" y="449" textLength="78"><tspan fill="#4285f4">G</tspan><tspan fill="#ea4335">o</tspan><tspan fill="#fbbc05">o</tspan><tspan fill="#4285f4">g</tspan><tspan fill="#34a853">l</tspan><tspan fill="#ea4335">e</tspan></text>
      </svg>
      <div class="chrome">
        <div class="btn"><svg width="24" height="24" viewBox="0 0 24 24" fill="none" stroke="#666" stroke-width="2.5"><path d="M1.7,8.5V2.2H8M16,2.2h6.3v6.3M22.3,15.5v6.3H16M8,21.8H1.7v-6.3"></path></svg></div>
        <div class="zoomer"><svg viewBox="0 0 50 50"><path d="M13.3,22h23.4M25,11v22" stroke="#666" stroke-width="4.8"></path></svg><div class="sep"></div><svg viewBox="0 0 50 50"><path d="M13.3,27.5h23.4" stroke="#666" stroke-width="4.8"></path></svg></div>
        <div class="legal"><div class="l1">Map data ©2018 Google</div><div class="l2">Terms of Use</div><div class="l3">Report a map error</div></div>
      </div>`;
  }
}

@customElement("app-root")
class AppRoot extends LitElement {
  static styles = css`
    :host { display: block; zoom: 0.94356; background: #fff; color: #000; font-family: Lato, sans-serif; font-weight: 700; letter-spacing: 2px; --gold: #e6b325; }
    * { box-sizing: border-box; margin: 0; }
    h1, h2, h3, h4, ul { padding: 0; font-weight: inherit; list-style: none; }
    a { color: inherit; text-decoration: none; }
    .hours { height: 24px; text-align: center; background: var(--gold); font: 400 14px/23px "Liberation Sans", Arial, sans-serif; }
    .bar { height: 91px; background: #000; color: #fff; display: grid; grid-template-columns: 1fr auto 1fr; align-items: center; }
    .social { display: flex; padding: 4px 0 0 139px; align-items: center; fill: var(--gold); }
    .fb { width: 15px; height: 24px; margin-right: 36px; } .ig { width: 25px; height: 25px; margin-right: 31px; } .tw { width: 24px; height: 24px; }
    .brand { font-size: 32px; line-height: 40px; padding-top: 11px; letter-spacing: 12.8px; }
    .burger { justify-self: end; width: 47px; margin: 7px 239px 0 0; display: grid; gap: 12px; }
    .burger i { height: 3px; background: var(--gold); } .burger i:last-child { width: 23.5px; }
    .hero { height: 804px; display: grid; overflow: hidden; }
    .hero hero-map, .plate { grid-area: 1 / 1; }
    .hero hero-map { height: 804px; letter-spacing: 0; font-weight: 400; }
    .plate { z-index: 1; margin: 405px auto 0; width: 1152px; height: 246px; background: #fff; display: grid; place-items: center; padding-top: 12.6px; }
    .plate h1 { font-size: 100px; line-height: 120px; color: var(--gold); letter-spacing: 2.3px; }
    .visit { height: 1453px; padding-top: 247px; text-align: center; font-size: 20px; line-height: 40px; }
    h2 { font-size: 60px; line-height: 72px; letter-spacing: 2.3px; }
    .visit h2 { color: var(--gold); margin-bottom: 72.1px; }
    .lig { font-feature-settings: "liga" 1; }
    .cols { display: grid; grid-template-columns: 346px 459px; gap: 217px; margin: 171.1px 0 0 384px; }
    .cols local-map { letter-spacing: 0; font-weight: 400; text-align: left; }
    .info { margin-top: -4px; } .info h3 { font-size: 30px; line-height: 40px; color: var(--gold); margin-bottom: 10.4px; }
    .phone { margin: 11.4px 0 84.6px; }
    .contact { height: 1504px; background: var(--gold); padding-top: 156.3px; text-align: center; }
    .contact h2 { color: #fff; margin-bottom: 28.3px; } .contact p { font-size: 20px; line-height: 40px; }
    form { width: 1021.4px; margin: 95.4px auto 0; display: grid; gap: 96px; justify-items: center; }
    input, textarea, button { font: 400 20px/24px "Liberation Sans", Arial, sans-serif; width: 100%; border: 0; border-radius: 0; padding: 0 31px; letter-spacing: 0; background: #fff; }
    input { height: 60.35px; } ::placeholder { color: #757575; opacity: 1; }
    textarea { height: 131.3px; padding-top: 20px; font-family: Lato, sans-serif; font-weight: 700; display: block; overflow: auto; }
    button { width: 1018.6px; height: 66px; border: 3.2px solid #000; background: transparent; color: #000; }
    footer { height: 465px; background: #000; color: #fff; padding-top: 65.3px; text-align: center; font: 400 16px/32px "Liberation Sans", Arial, sans-serif; }
    .map { display: grid; grid-template-columns: 620fr 680fr 620fr; }
    h4 { font-size: 20px; line-height: 24px; margin-bottom: 33.4px; }
    .tel { font-size: 20px; line-height: 24px; } .addr { font-size: 12px; line-height: 24px; letter-spacing: 2.5px; margin: 24.8px 0 34.6px; } .mail { font-size: 14px; line-height: 24px; }
    .copy { font-size: 12px; line-height: 24px; letter-spacing: 2.41px; margin-top: 57.9px; }
  `;
  render() {
    return html`
      <div class="hours">Hours | Mon - Thurs 3:30-9 | Fri 3:30-10 | Sat 12-10 | Sun 12-8</div>
      <header class="bar">
        <div class="social">
          <svg class="fb" viewBox="0 0 15 24"><path d="M4.4,24V13H.5V9H4.4V5.5C4.4,1.8 6.5,0 9.8,0H14V4H11.2C9.5,4 9.1,4.8 9.1,6V9H13.8L13.2,13H9.1V24Z"></path></svg>
          <svg class="ig" viewBox="0 0 25 25"><g fill="none" stroke="#e6b325" stroke-width="1.7"><rect x=".9" y=".9" width="23.2" height="23.2" rx="6"></rect><circle cx="12.5" cy="12.5" r="5.4"></circle></g><circle cx="19.2" cy="5.9" r="1.4"></circle></svg>
          <svg class="tw" viewBox="0 0 24 24"><path d="M24 4.56c-.9.4-1.8.7-2.8.8 1-.6 1.800-1.600 2.200-2.700-1 .6-2 1-3.100 1.200a4.920 4.920 0 0 0-8.400 4.500C7.700 8.100 4.100 6.100 1.700 3.100a4.930 4.930 0 0 0 1.500 6.600c-.8 0-1.600-.2-2.200-.6v.1c0 2.300 1.600 4.400 3.900 4.800-.7.200-1.500.200-2.200.1.600 2 2.400 3.400 4.600 3.400A9.900 9.900 0 0 1 0 19.500a13.940 13.940 0 0 0 7.500 2.200c9.100 0 14.300-7.700 14-14.600 1-.7 1.800-1.600 2.500-2.500z"></path></svg>
        </div>
        <div class="brand">CAPTAIN FATTY'S</div>
        <div class="burger"><i></i><i></i><i></i></div>
      </header>
      <section class="hero"><hero-map></hero-map><div class="plate"><h1>CONTACT</h1></div></section>
      <section class="visit">
        <h2>COME VISIT US!</h2><p>The entrance to our tasting room is in the back of our <span class="lig">office</span> front at the roll-up door.</p>
        <div class="cols">
          <div class="info"><h3>Address</h3><p>6483 Calle Real, Suite D</p><p>Goleta, CA 93117</p><p class="phone">805-895-6669</p>
            <h3>Hours</h3><p>Mon - Thurs 3:30-9</p><p>Fri 3:30-10</p><p>Sat 12-10</p><p>Sun 12-8</p></div>
          <local-map></local-map>
        </div>
      </section>
      <section class="contact">
        <h2>CONTACT</h2><p>Send us any questions you have! Like beer, we're here for you.</p>
        <form @submit=${(e: Event) => e.preventDefault()}>
          ${["First Name", "Last Name", "Email", "Subject"].map((p) => html`<input placeholder=${p} />`)}
          <textarea placeholder="Message"></textarea><button>Submit</button>
        </form>
      </section>
      <footer>
        <div class="map">
          <div><h4>SITE MAP</h4><ul>${["Home", "On Tap", "Events", "Shop", "About", "Contact", "FAQs"].map((l) => html`<li><a href="#">${l}</a></li>`)}</ul></div>
          <div><h4>CAPTAIN FATTY'S BREWERY</h4><div class="tel">805-895-6669</div><div class="addr">6483 Calle Real, Suite D<br />Goleta, CA 93117</div><div class="mail">matt@captainfattys.com</div></div>
          <div><h4>SOCIAL MEDIA</h4><ul>${["Facebook", "Instagram", "Twitter"].map((l) => html`<li><a href="#">${l}</a></li>`)}</ul></div>
        </div>
        <p class="copy">Copyright ©2018 Adam Prinz | This site is for educational purposes only.</p>
      </footer>`;
  }
}
